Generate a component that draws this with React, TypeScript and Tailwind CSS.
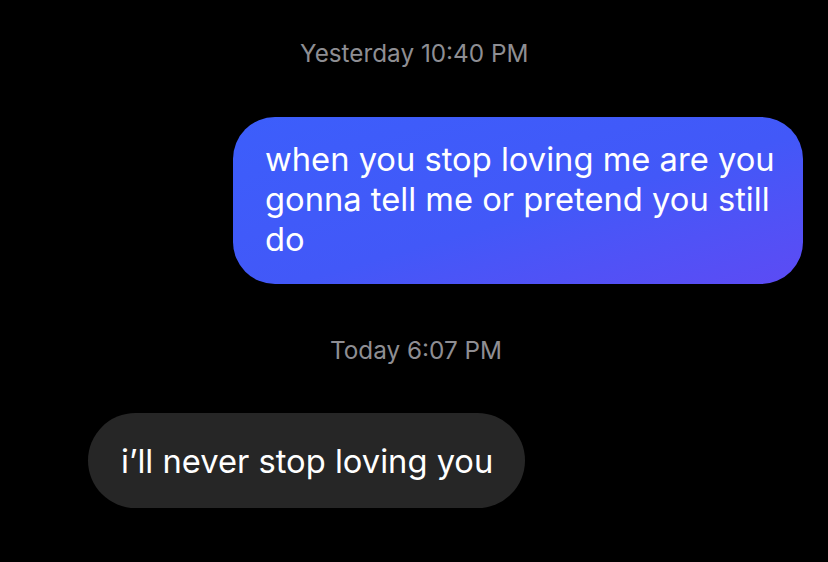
import React from 'react';

const App: React.FC = () => {
  return (
    <div
      className="w-[828px] h-[562px] bg-black overflow-hidden flex flex-col"
      style={{ fontFamily: 'Inter, "Noto Sans", sans-serif' }}
    >
      {/* Yesterday timestamp */}
      <div className="mt-[38px] h-[30px] leading-[30px] text-[24.3px] text-[#8e8e93] pl-[300px]">
        Yesterday 10:40 PM
      </div>

      {/* Sent message */}
      <div className="mt-[49px] ml-[233px] w-[570px] h-[167px] rounded-[42px] bg-gradient-to-br from-[#3c5efb] via-[#4258f8] via-55% to-[#5c4bf4] pl-[32px] pr-[18px] pt-[22px]">
        <p className="text-white text-[32.7px] leading-[40px]">
          when you stop loving me are you gonna tell me or pretend you still do
        </p>
      </div>

      {/* Today timestamp */}
      <div className="mt-[51px] h-[30px] leading-[30px] text-[24.3px] text-[#8e8e93] pl-[330px]">
        Today 6:07 PM
      </div>

      {/* Received message */}
      <div className="mt-[48px] ml-[88px] w-[437px] h-[95px] rounded-[48px] bg-[#262626] flex items-center pl-[33px]">
        <span className="text-white text-[32.7px] leading-[40px]">i’ll never stop loving you</span>
      </div>
    </div>
  );
};

export default App;
